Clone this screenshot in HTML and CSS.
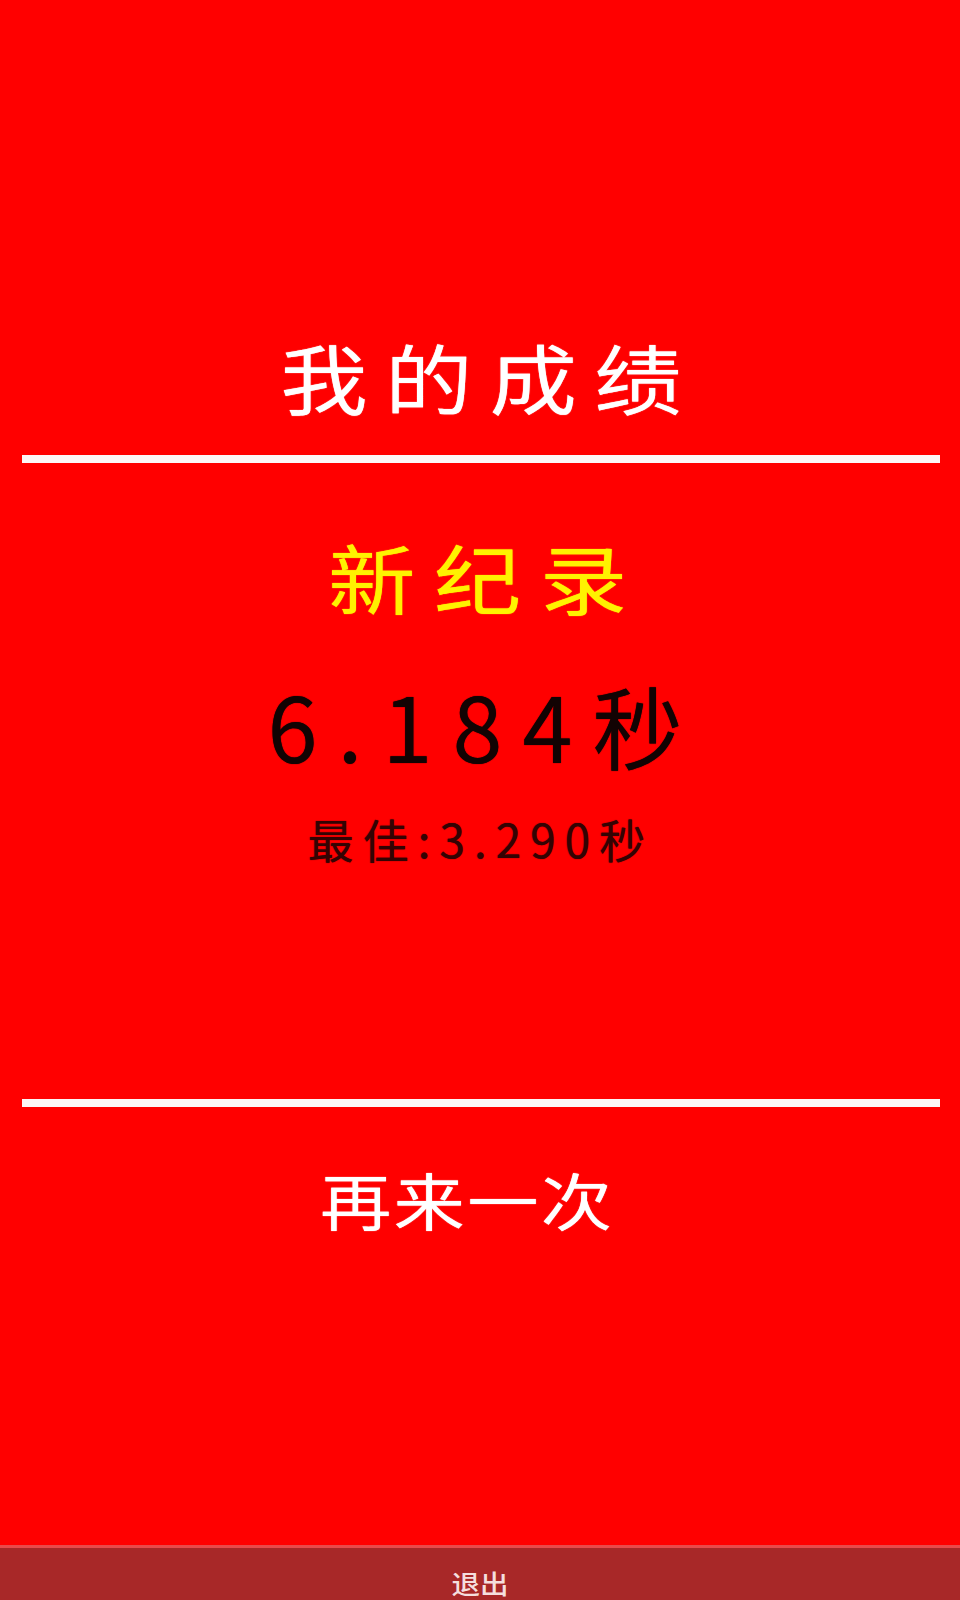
FILE: index.html
```html
<!DOCTYPE html>
<html lang="zh-CN">
<head>
<meta charset="utf-8">
<title>我的成绩</title>
<link rel="stylesheet" href="styles.css">
</head>
<body>
<div class="screen">
  <main class="content">
    <h1 class="title">我的成绩</h1>
    <div class="divider divider-top"></div>
    <div class="record">新纪录</div>
    <div class="time">6.184秒</div>
    <div class="best">最佳:3.290秒</div>
    <div class="divider divider-bottom"></div>
    <div class="retry">再来一次</div>
  </main>
  <footer class="exit-bar">
    <span class="exit">退出</span>
  </footer>
</div>
</body>
</html>
```

FILE: styles.css
```css
html, body {
  margin: 0;
  padding: 0;
}
body {
  background: #ff0000;
  font-family: "Noto Sans CJK SC", "Noto Sans", sans-serif;
}
.screen {
  height: 1600px;
  display: flex;
  flex-direction: column;
  overflow: hidden;
}
.content {
  flex: 1;
  display: flex;
  flex-direction: column;
  align-items: stretch;
  padding: 0 20px 0 22px;
}
.title {
  margin: 326px 0 0;
  font-size: 76px;
  line-height: 100px;
  font-weight: 400;
  color: #ffffff;
  text-align: center;
  letter-spacing: 15px;
  padding-left: 15px;
  transform: scaleX(1.15);
  text-shadow: 0 0 1px #ffffff;
}
.divider {
  height: 8px;
  background: #fdf6f6;
}
.divider-top {
  margin-top: 29px;
}
.record {
  margin-top: 63px;
  font-size: 76px;
  line-height: 100px;
  font-weight: 400;
  color: #fff200;
  text-align: center;
  letter-spacing: 16px;
  padding-left: 10px;
  transform: scaleX(1.15);
  text-shadow: 0 0 1px #fff200;
}
.time {
  margin-top: 43px;
  font-size: 90px;
  line-height: 110px;
  font-weight: 400;
  color: #120303;
  text-align: center;
  letter-spacing: 20px;
  padding-left: 8px;
  text-shadow: 0 0 1px #120303;
}
.best {
  margin-top: 29px;
  font-size: 46px;
  line-height: 60px;
  font-weight: 400;
  color: #330303;
  text-align: center;
  letter-spacing: 9px;
  text-shadow: 0 0 1px #330303;
}
.divider-bottom {
  margin-top: 231px;
}
.retry {
  margin-top: 52px;
  font-size: 62px;
  line-height: 80px;
  font-weight: 400;
  color: #ffffff;
  text-align: center;
  letter-spacing: 2px;
  padding-right: 24px;
  transform: scaleX(1.15);
  text-shadow: 0 0 1px #ffffff;
}
.exit-bar {
  height: 52px;
  border-top: 3px solid #e84a4a;
  background: #a82828;
  display: flex;
  justify-content: center;
  align-items: flex-end;
}
.exit {
  font-size: 26px;
  line-height: 30px;
  padding-bottom: 2px;
  font-weight: 500;
  color: #f5dede;
  transform: scaleX(1.1);
}
```
